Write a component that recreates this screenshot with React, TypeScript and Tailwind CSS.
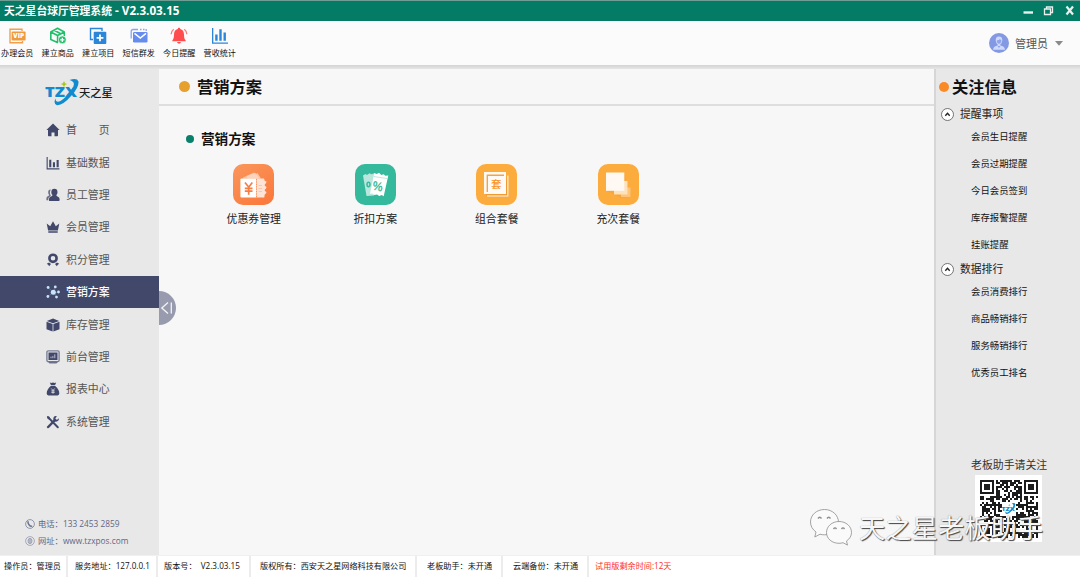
import type { ReactNode } from "react";
import { clsx } from "clsx";

type IconItem = { label: string; icon: ReactNode };

const NAVY = "#41486b";

const toolbarItems: IconItem[] = [
  {
    label: "办理会员",
    icon: (
      <svg viewBox="0 0 18 18" className="size-[18px]" fill="none">
        <path d="M14 4V2.200H2V15.700H14.500V14" stroke="#f0a04b" strokeWidth="1.400" />
        <rect x="3.600" y="4.400" width="14" height="9" rx="1" fill="#f09a3e" />
        <text x="10.600" y="11.300" textAnchor="middle" fontSize="6.500" fontWeight="800" fill="#fff" textLength="11" lengthAdjust="spacingAndGlyphs">
          VIP
        </text>
      </svg>
    ),
  },
  {
    label: "建立商品",
    icon: (
      <svg viewBox="0 0 18 18" className="size-[18px]" fill="none" stroke="#22bf6b" strokeWidth="1.600" strokeLinejoin="round">
        <path d="M9 15.700 1.800 12.500V5L8.500 1.200 15.300 5v4M1.800 5l6.800 3.500L15.300 5M8.600 8.500v7M5.200 3.200l6.500 3.500" />
        <circle cx="13.300" cy="12.800" r="3.900" fill="#22bf6b" stroke="#fbfbfb" strokeWidth="0.600" />
        <path d="M13.300 10.700v4.200M11.200 12.800h4.200" stroke="#fff" strokeWidth="1.300" />
      </svg>
    ),
  },
  {
    label: "建立项目",
    icon: (
      <svg viewBox="0 0 18 18" className="size-[18px]" fill="none">
        <path d="M4 12.500H1.500V1.500H13V4" stroke="#2b86da" strokeWidth="1.400" />
        <rect x="4.700" y="4.700" width="12.600" height="12.300" rx="1" fill="#2b86da" />
        <path d="M11 7.500v6.800M7.600 10.900h6.800" stroke="#fff" strokeWidth="1.800" />
      </svg>
    ),
  },
  {
    label: "短信群发",
    icon: (
      <svg viewBox="0 0 18 18" className="size-[18px]" fill="none">
        <path d="M1.200 11.500V4.500q0-2 2-2H8M10 2.500h1.500M13 2.500h1.500M16.200 2v2" stroke="#87a3f3" strokeWidth="1.300" />
        <rect x="3" y="5" width="14.500" height="10.500" rx="1.200" fill="#668cf0" />
        <path d="m4.500 6.300 5.800 4.700L16 6.300" stroke="#fff" strokeWidth="1.500" />
      </svg>
    ),
  },
  {
    label: "今日提醒",
    icon: (
      <svg viewBox="0 0 18 18" className="size-[18px]" fill="#ff4d4f">
        <path d="M9 .8c.8 0 1.200.5 1.200 1.200C13 2.600 14 5 14 7.500c0 3.500.6 4.800 1.600 5.700v1H2.400v-1C3.400 12.300 4 11 4 7.500 4 5 5 2.600 7.800 2 7.800 1.300 8.200.8 9 .8ZM7 15h4q-.4 1.800-2 1.800T7 15Z" />
        <path d="M3.700 2.200Q1.300 4 1.100 7.300M14.300 2.200Q16.700 4 16.900 7.300" fill="none" stroke="#ff7b7b" strokeWidth="1.300" />
      </svg>
    ),
  },
  {
    label: "营收统计",
    icon: (
      <svg viewBox="0 0 18 18" className="size-[18px]" fill="#2b86da">
        <path d="M1 1h1.300v14.500H17v1.300H1ZM4.200 7.500h2.400v6.300H4.200ZM8.300 2.200h2.400v11.600H8.300ZM12.500 5.500h2.400v8.300h-2.400Z" />
      </svg>
    ),
  },
];

const menuItems: IconItem[] = [
  {
    label: "首　　页",
    icon: <path d="M7 .6 13.600 6.900H12V12.600Q12 13.200 11.400 13.200H8.500V9.500H5.500V13.200H2.600Q2 13.200 2 12.600V6.900H.4Z" />,
  },
  {
    label: "基础数据",
    icon: <path d="M.6 1H1.700v11.200h11.700v1.200H.6ZM3.200 3.800h2.100v7.500H3.200ZM6.900 6.300H9v5H6.900ZM10.600 4h2.100v7.300h-2.100Z" />,
  },
  {
    label: "员工管理",
    icon: (
      <>
        <path d="M4.800 1.600Q2 1.500 2.200 4.500q0 1.600 1 2.500-.3.800-1.500 1.200Q.4 8.700.4 10.500v1.700h1.700Q2.200 9 5 8Q3 5 4.800 1.600Z" opacity=".75" />
        <path d="M8.400.8q3.100 0 3.100 3.400 0 1.900-1.200 2.900-.1 1 1.200 1.400 2.100.6 2.100 2.500V12.200q0 .8-.8.800H3.700Q2.900 13 2.900 12.200V11q0-1.900 2.100-2.500 1.700-.4 1.500-1.400-1.200-1-1.200-2.900Q5.300.8 8.400.8Z" />
      </>
    ),
  },
  {
    label: "会员管理",
    icon: <path d="m.7 3.600 3.500 2.600L7 1.200l2.800 5L13.300 3.600l-1.400 7H2.100ZM2.300 11.200h9.400v1.500H2.300Z" />,
  },
  {
    label: "积分管理",
    icon: (
      <>
        <circle cx="7" cy="5.300" r="3.600" fill="none" stroke={NAVY} strokeWidth="2.600" />
        <path d="m.8 10.800 2.200-1.400 2 1.500-1.900 2.400-.7-1.300ZM13.200 10.800l-2.200-1.400-2 1.500 1.900 2.400.7-1.300Z" />
      </>
    ),
  },
  {
    label: "营销方案",
    icon: (
      <g fill="#c9e4f8" stroke="#8199c4" strokeWidth=".5">
        <path d="m7.300 7.200-4.500-4M7.300 7.200l4.700.3M7.300 7.200l-5 4M7.300 7.200l3.500 4.300M7.300 7.200l2-5" />
        <circle cx="7.300" cy="7.200" r="2.500" stroke="none" />
        <circle cx="2.100" cy="2.500" r="1.400" stroke="none" />
        <circle cx="9.300" cy="1.900" r="1.400" stroke="none" />
        <circle cx="12.500" cy="7" r="1.400" stroke="none" />
        <circle cx="1.900" cy="11.500" r="1.400" stroke="none" />
        <circle cx="10.500" cy="12.100" r="1.400" stroke="none" />
      </g>
    ),
  },
  {
    label: "库存管理",
    icon: <path d="M7 .5 13.200 2.900 7 5.200.8 2.900ZM.5 3.700l6.100 2.300v7.600L.5 11.200ZM13.500 3.700 7.400 6v7.600l6.100-2.400Z" />,
  },
  {
    label: "前台管理",
    icon: (
      <>
        <rect x=".9" y=".9" width="12.200" height="10.700" rx="1.300" fill="none" stroke={NAVY} strokeOpacity=".65" strokeWidth="1.400" />
        <rect x="2.500" y="2.500" width="9" height="7.500" />
        <path d="M2 11.700h10l-1.500 1.700h-7Z" opacity=".7" />
        <path d="M5 8.200V6.700M6.900 8.200V5.900M8.800 8.200V4.300" stroke="#b9bdd0" strokeWidth="1" />
      </>
    ),
  },
  {
    label: "报表中心",
    icon: (
      <>
        <path d="M3.800.6q1.600.8 3.200 0 1.600.8 3.200 0L9 3.200H5ZM4.800 4h4.400q4.200 3.500 4.100 7.600 0 1.800-1.700 1.800H2.400Q.7 13.400.7 11.600.6 7.500 4.800 4Z" />
        <path d="m5.300 6.500 1.700 2 1.700-2M7 8.500v3.200M5.300 8.900h3.400M5.300 10.400h3.400" fill="none" stroke="#e8e8e8" strokeWidth=".8" />
      </>
    ),
  },
  {
    label: "系统管理",
    icon: (
      <>
        <path d="m2.200 2.400 9.600 9.800" stroke={NAVY} strokeWidth="2" strokeLinecap="round" />
        <path d="M2.200 12 9 5" stroke={NAVY} strokeWidth="2.500" strokeLinecap="round" />
        <path d="M12.800 3.300 10.900 5 9.200 3.500 10.900 1.200Q8.700.5 7.500 2.400q-.7 1.900.4 3.500 1.700 1.300 3.500.4 2.100-1 1.400-3ZM.9 1l2.500.8 1 2.100-1.100.8-1.700-1Z" />
      </>
    ),
  },
];

const planItems: IconItem[] = [
  {
    label: "优惠券管理",
    icon: (
      <svg viewBox="0 0 41 41" className="size-[41px]">
        <defs>
          <linearGradient id="coupon" x1="0" y1="0" x2="0.700" y2="1">
            <stop offset="0" stopColor="#fa975c" />
            <stop offset="1" stopColor="#fb7a3d" />
          </linearGradient>
        </defs>
        <rect width="41" height="41" rx="10" fill="url(#coupon)" />
        <path d="m10 13.500 11-5 2 1.500 1.500-1L28 14.500H10Z" fill="#fbc3a5" />
        <path d="m14 12 8.500-3 4 5.500H14Z" fill="#fddac8" opacity=".7" />
        <path d="M23.500 14.500H31q0 2.500 2.500 3-.2 2-1.700 2.800Q31 22 33.500 23q-.3 2-1.700 2.500-.8 1.700 1.700 2.600-.3 1.700-1.800 2.300L31.300 33.500H23.500Z" fill="#fee4d6" />
        <path d="M8.500 14.500h14.800v19H8.500Q7.400 33.500 7.400 32.500V15.500q0-1 1.100-1Z" fill="#fff" />
        <path d="M23.500 15v18.500" stroke="#fb8d55" strokeWidth=".9" strokeDasharray="1.200 1.200" />
        <path d="m12 18.500 3.700 4.700 3.600-4.700M15.700 23.200v7.500M11.800 24.300h7.700M11.800 27.200h7.700" fill="none" stroke="#f97c42" strokeWidth="1.700" />
        <path d="M25.500 21.500h3.500M25.500 24.500h3.500M25.500 27.500h3.500" stroke="#fdc6ab" strokeWidth="1.200" />
      </svg>
    ),
  },
  {
    label: "折扣方案",
    icon: (
      <svg viewBox="0 0 41 41" className="size-[41px]">
        <rect width="41" height="41" rx="10" fill="#34b99d" />
        <path d="m8 11.500 2.500-1.500 1.500 1 2.500-1.700 2 1 3.500-1.300-1 22.500-7.500.5Z" fill="#b9e7dd" />
        <ellipse cx="13.500" cy="20.500" rx="1.500" ry="2.200" fill="none" stroke="#34b99d" strokeWidth="1.500" />
        <path d="m19.300 9 2.500 1 2.200-1.300L26.300 11l2.300-.8 1.700 1.600 3-.4-4.600 20.800-2-1.300-2.500 1-2.200-1.500-2.500.7-2.300-1.500-2.200.2Z" fill="#fff" />
        <path d="m18.500 12.500 13.500 2" stroke="#bfe9df" strokeWidth="1" />
        <text x="22.700" y="26.700" textAnchor="middle" fontSize="12.500" fontWeight="600" fill="#34b99d" transform="rotate(12 23 22)">
          %
        </text>
      </svg>
    ),
  },
  {
    label: "组合套餐",
    icon: (
      <svg viewBox="0 0 41 41" className="size-[41px]">
        <rect width="41" height="41" rx="10" fill="#fbac3d" />
        <path d="m30 11 3 22H11l-2-4Z" fill="#f19a32" />
        <path d="M31.800 11.500V32H11" fill="none" stroke="#fee0b5" strokeWidth="1.600" />
        <rect x="8" y="8" width="22" height="22" fill="#fffaf6" />
        <path d="M11.300 28V11.300H28" fill="none" stroke="#f5a53d" strokeWidth="1.400" />
        <text x="20.300" y="24" textAnchor="middle" fontSize="10.500" fontWeight="500" fill="#f7941e">
          套
        </text>
      </svg>
    ),
  },
  {
    label: "充次套餐",
    icon: (
      <svg viewBox="0 0 41 41" className="size-[41px]">
        <rect width="41" height="41" rx="10" fill="#fbac3d" />
        <path d="M26 9 33 33 23 34 9 27Z" fill="#f5a037" opacity=".5" />
        <rect x="23" y="23.500" width="9.500" height="9.500" fill="#fdc47a" />
        <rect x="16" y="17" width="13.500" height="13.500" fill="#fee2bc" />
        <rect x="8" y="8.500" width="18.300" height="18.300" fill="#fff8f3" />
      </svg>
    ),
  },
];

const infoGroups = [
  { title: "提醒事项", items: ["会员生日提醒", "会员过期提醒", "今日会员签到", "库存报警提醒", "挂账提醒"] },
  { title: "数据排行", items: ["会员消费排行", "商品畅销排行", "服务畅销排行", "优秀员工排名"] },
];

const statusItems = [
  { text: "操作员：管理员", className: "w-[68px] pl-1" },
  { text: "服务地址：127.0.0.1", className: "w-[90px] pl-[7px]" },
  { text: "版本号：  V2.3.03.15", className: "w-[93px] pl-[6px]" },
  { text: "版权所有：西安天之星网络科技有限公司", className: "w-[166px] pl-[9px]" },
  { text: "老板助手：未开通", className: "w-[86px] pl-[10px]" },
  { text: "云端备份：未开通", className: "w-[86px] pl-[10px]" },
];

function TzxMark({ className }: { className: string }) {
  return (
    <svg viewBox="0 0 36 28" className={className}>
      <text x="1" y="19" fontSize="13.500" fontWeight="800" fill="#118bd0" textLength="32" lengthAdjust="spacingAndGlyphs">
        TZX
      </text>
      <path
        d="M25.500 2Q33-.5 34.500 3.500 35 9.500 27.500 17.500 19 27.500 13 27.200 9 26 11.500 20.500 11.800 25.500 16.500 23 21.500 20 27 12.500 33.500 4.200 25.500 2Z"
        fill="#118bd0"
      />
      <path d="m20 3 1 2.200 2.200.8-2.200 1L20 9.200 19 7l-2.200-1 2.200-.8Z" fill="#a5c916" />
    </svg>
  );
}

const QR_SIZE = 29;

/** Finder squares in three corners, fixed pseudo-random modules elsewhere. */
function qrModule(x: number, y: number): boolean {
  const fx = x < 8 ? x : x > QR_SIZE - 9 ? QR_SIZE - 1 - x : -1;
  const fy = y < 8 ? y : y > QR_SIZE - 9 ? QR_SIZE - 1 - y : -1;
  const bottomRight = x > QR_SIZE - 9 && y > QR_SIZE - 9;
  if (fx >= 0 && fy >= 0 && !bottomRight) {
    if (fx === 7 || fy === 7) return false;
    const ring = Math.max(Math.abs(fx - 3), Math.abs(fy - 3));
    return ring !== 2;
  }
  let h = (x * 374761393 + y * 668265263) | 0;
  h = Math.imul(h ^ (h >>> 13), 1274126177);
  return ((h ^ (h >>> 16)) & 15) < 9;
}

function QrCode() {
  let d = "";
  for (let y = 0; y < QR_SIZE; y++) {
    for (let x = 0; x < QR_SIZE; x++) {
      if (qrModule(x, y)) d += `M${x} ${y}h1v1h-1Z`;
    }
  }
  return (
    <div className="relative flex h-[67px] w-[67px] items-center justify-center bg-white">
      <svg viewBox={`0 0 ${QR_SIZE} ${QR_SIZE}`} className="size-[58px]">
        <path d={d} fill="#1c1c1c" />
      </svg>
      <div className="absolute inset-0 flex items-center justify-center">
        <div className="flex size-[14px] items-center justify-center bg-white">
          <TzxMark className="h-[13px] w-[15px] shrink-0" />
        </div>
      </div>
    </div>
  );
}

function TitleBar() {
  return (
    <header className="flex h-[21px] items-center border-t border-[#6f9f94] bg-[#047c65] pl-1 pr-[5px] text-white">
      <h1 className="whitespace-pre text-[10.800px] font-bold leading-none">
        天之星台球厅管理系统<span className="text-[11.700px]"> - V2.3.03.15</span>
      </h1>
      <svg viewBox="0 0 54 12" className="ml-auto h-3 w-[54px]" fill="none" stroke="#e9f1ef">
        <path d="M2.500 7.500h9.500" strokeWidth="2.400" />
        <path d="M23.500 4h6v5.500h-6ZM25.500 3.500V2h6v5.500H30" strokeWidth="1.300" />
        <path d="m45.500 1.500 6.500 8M52 1.500l-6.500 8" strokeWidth="2.200" />
      </svg>
    </header>
  );
}

function Toolbar() {
  return (
    <div className="flex h-11 bg-[#fbfbfb]">
      <nav className="-ml-[3px] flex">
        {toolbarItems.map((item) => (
          <button key={item.label} className="flex w-[40.500px] flex-col items-center pt-[6px]">
            {item.icon}
            <span className="mt-1 whitespace-nowrap text-[8.100px] leading-none text-[#111]">{item.label}</span>
          </button>
        ))}
      </nav>
      <div className="ml-auto flex items-center pr-[17px]">
        <svg viewBox="0 0 20 20" className="size-5">
          <circle cx="10" cy="10" r="10" fill="#8499e3" />
          <path d="M10 3.500q3.500 0 3.300 4-.3 3-2 4v1q4.200.5 4.700 4.200H4q.5-3.700 4.700-4.200v-1q-1.700-1-2-4Q6.500 3.500 10 3.500Z" fill="#cfd9fa" />
          <path d="M7.700 7.500q2.500-.3 3.300-1.500.5 1 1.400 1.300-.2 3.400-2.400 3.500-2.200-.2-2.300-3.300ZM8.500 13l1.500 2 1.500-2" fill="#8fa4ea" />
        </svg>
        <span className="ml-[6px] text-[11px] leading-none text-[#555]">管理员</span>
        <svg viewBox="0 0 8 5" className="ml-[7px] h-[5px] w-2">
          <path d="M0 0h8L4 4.800Z" fill="#8a8a8a" />
        </svg>
      </div>
    </div>
  );
}

function Sidebar() {
  return (
    <aside className="relative flex w-[159px] shrink-0 flex-col bg-[#e8e8e8]">
      <div className="flex h-[45px] items-center pl-[44px]">
        <TzxMark className="h-[28px] w-[36px]" />
        <span className="-ml-px mt-[2px] text-[11.300px] font-medium leading-none text-[#1d1d1d]">天之星</span>
      </div>
      <nav>
        {menuItems.map((item) => {
          const active = item.label === "营销方案";
          return (
            <button
              key={item.label}
              className={clsx(
                "flex h-[32.400px] w-full items-center pl-[46px] text-[10.900px] leading-none",
                active ? "bg-[#414869] font-medium text-white" : "text-[#555]",
              )}
            >
              <svg viewBox="0 0 14 14" className="size-[14px]" fill={NAVY}>
                {item.icon}
              </svg>
              <span className="ml-[6px] pt-px">{item.label}</span>
            </button>
          );
        })}
      </nav>
      <div className="mt-auto flex flex-col gap-[7px] pb-[9px] pl-[25px] text-[8.300px] leading-none text-[#5f6685]">
        <div className="flex items-center">
          <svg viewBox="0 0 10 10" className="size-[10px]" fill="none" stroke="#6c7390">
            <circle cx="5" cy="5" r="4.400" strokeWidth=".7" />
            <path d="M3.400 2.300Q2.300 3.500 4 5.700q1.800 2.300 3.300 1.300" strokeWidth="1.500" />
          </svg>
          <span className="ml-[3px]">电话：133 2453 2859</span>
        </div>
        <div className="flex items-center">
          <svg viewBox="0 0 10 10" className="size-[10px]" fill="none" stroke="#8a8fa7" strokeWidth=".7">
            <circle cx="5" cy="5" r="4.400" />
            <ellipse cx="5" cy="5" rx="2" ry="2.700" />
            <path d="M3 4h4M3 6h4M5 2.300v5.400" />
          </svg>
          <span className="ml-[3px]">网址：www.tzxpos.com</span>
        </div>
      </div>
      {/* collapse handle hangs over the content area */}
      <button className="absolute left-full top-[222px] z-10 flex h-[34px] w-[17px] items-center rounded-r-full bg-[#989bae]">
        <svg viewBox="0 0 14 14" className="ml-px size-[14px]" fill="none" stroke="#f4f4f6" strokeWidth="1.300">
          <path d="M8 1.500 1.800 7 8 12.500M11.300 1.500v11" />
        </svg>
      </button>
    </aside>
  );
}

function PlanPanel() {
  return (
    <main className="min-w-0 flex-1 bg-[#f7f7f7]">
      <div className="flex h-[37px] items-center border-b-2 border-[#dedede] pl-[20px]">
        <span className="size-[11px] rounded-full bg-[#e7a02e]" />
        <h2 className="ml-[7px] pt-[2px] text-[16.300px] font-bold leading-none text-[#111]">营销方案</h2>
      </div>
      <div className="flex items-center pl-[27px] pt-[26px]">
        <span className="size-2 rounded-full bg-[#08806a]" />
        <h3 className="ml-[7px] text-[13.600px] font-bold leading-none text-[#111]">营销方案</h3>
      </div>
      <div className="flex pl-[34px] pt-[18px]">
        {planItems.map((item) => (
          <button key={item.label} className="flex w-[121.500px] flex-col items-center">
            {item.icon}
            <span className="mt-[9px] text-[10.900px] leading-none text-[#222]">{item.label}</span>
          </button>
        ))}
      </div>
    </main>
  );
}

function InfoPanel() {
  return (
    <aside className="flex w-[146px] shrink-0 flex-col border-l-2 border-[#d6d6d6] bg-[#e8e8e8]">
      <div className="flex h-[35px] items-center pl-[3px]">
        <span className="size-[10px] rounded-full bg-[#fb8a26]" />
        <h2 className="ml-[3px] pt-px text-[16.300px] font-bold leading-none text-[#111]">关注信息</h2>
      </div>
      {infoGroups.map((group) => (
        <section key={group.title} className="mb-px">
          <div className="flex h-5 items-center pl-[5px]">
            <svg viewBox="0 0 13 13" className="size-[13px]">
              <circle cx="6.500" cy="6.500" r="6" fill="#fff" stroke="#555" strokeWidth=".8" />
              <path d="M4.300 7.700 6.500 5.300l2.200 2.400" fill="none" stroke="#222" strokeWidth="1.400" />
            </svg>
            <span className="ml-[6px] pt-px text-[10.800px] leading-none text-[#222]">{group.title}</span>
          </div>
          <ul className="-mt-px">
            {group.items.map((item) => (
              <li key={item} className="flex h-[27px] items-center pl-[35px] text-[9.400px] leading-none text-[#111]">
                {item}
              </li>
            ))}
          </ul>
        </section>
      ))}
      <div className="mt-auto flex flex-col pb-[13px] pl-[35px]">
        <span className="mb-1 text-[10.900px] leading-none text-[#333]">老板助手请关注</span>
        <div className="pl-1">
          <QrCode />
        </div>
      </div>
    </aside>
  );
}

/** Embossed account watermark laid over the lower right corner. */
function Watermark() {
  return (
    <div className="pointer-events-none absolute left-[809px] top-[508px] z-20 flex items-center">
      <svg viewBox="0 0 44 38" className="h-[38px] w-[44px]" fill="#fafafa" stroke="#8d8d8d" strokeWidth=".8">
        <path d="M15.500 1.500C7.500 1.500 1.500 7 1.500 14c0 4 2 7.500 5.500 10l-1.200 5 5.200-2.800c1.500.5 3 .6 4.500.6 8 0 14-5.500 14-12.500s-6-12.800-14-12.800Z" />
        <path d="M30 13.500c-7 0-12.500 4.800-12.500 11S23 35.300 30 35.300c1.400 0 2.800-.2 4-.6l4.500 2.400-1-4.100c3-2 5-5 5-8.500 0-6.200-5.500-11-12.500-11Z" />
        <path d="M9 10.500q1.700-2.500 3.500 0M18 10.500q1.700-2.500 3.500 0M24.500 21q1.500-2.200 3 0M32.500 21q1.500-2.200 3 0" fill="none" strokeWidth="1.400" />
      </svg>
      <span className="ml-[6px] mt-[3px] whitespace-nowrap text-[26.300px] leading-none text-[#f7f7f7] [text-shadow:1px_1px_1px_#444,0_0_1px_#888]">
        天之星老板助手
      </span>
    </div>
  );
}

function StatusBar() {
  return (
    <footer className="flex h-[21px] items-stretch bg-white text-[8.150px] leading-none text-[#111]">
      {statusItems.map((item) => (
        <div
          key={item.text}
          className={clsx("flex shrink-0 items-center whitespace-pre border-r-2 border-[#ececec]", item.className)}
        >
          {item.text}
        </div>
      ))}
      <div className="flex items-center pl-[6px] text-[#ff2b2b]">试用版剩余时间:12天</div>
    </footer>
  );
}

export default function App() {
  return (
    <div
      lang="zh-CN"
      className="relative flex h-[577px] w-[1080px] flex-col overflow-hidden bg-white font-['Open_Sans','Noto_Sans_CJK_SC',sans-serif]"
    >
      <TitleBar />
      <Toolbar />
      <div className="h-1 shrink-0 bg-linear-to-b from-[#d4d4d4] to-[#e6e6e6]" />
      <div className="flex min-h-0 flex-1 border-b border-[#f0f0f0]">
        <Sidebar />
        <PlanPanel />
        <InfoPanel />
      </div>
      <StatusBar />
      <Watermark />
    </div>
  );
}
